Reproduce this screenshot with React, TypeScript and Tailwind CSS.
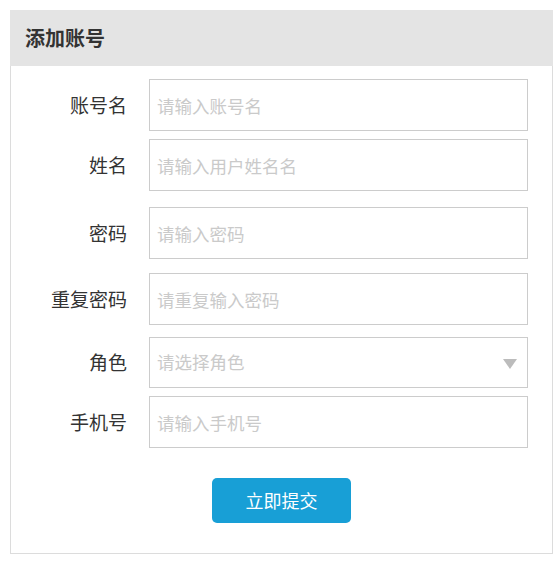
import { useState } from 'react';

const font = { fontFamily: '"Noto Sans CJK SC", "Noto Sans", sans-serif' };

type Field = {
  label: string;
  placeholder: string;
  gap: string;
  type?: string;
  select?: boolean;
};

const fields: Field[] = [
  { label: '账号名', placeholder: '请输入账号名', gap: 'mt-[13px]' },
  { label: '姓名', placeholder: '请输入用户姓名名', gap: 'mt-[8px]' },
  { label: '密码', placeholder: '请输入密码', gap: 'mt-[16px]', type: 'password' },
  { label: '重复密码', placeholder: '请重复输入密码', gap: 'mt-[14px]', type: 'password' },
  { label: '角色', placeholder: '请选择角色', gap: 'mt-[12px]', select: true },
  { label: '手机号', placeholder: '请输入手机号', gap: 'mt-[8px]' },
];

function FormRow({ field }: { field: Field }) {
  const [value, setValue] = useState('');

  return (
    <div className={`flex items-center ${field.gap}`}>
      <label className="w-[117px] pr-px text-right text-[19px] text-[#333]">{field.label}</label>
      {field.select ? (
        <div className="relative ml-[21px] flex h-[51px] w-[379px] items-center border border-[#ccc] px-[7px]">
          <span className="text-[17.5px] text-[#cacaca]">{field.placeholder}</span>
          {/* dropdown arrow */}
          <span className="absolute right-[10px] top-[21px] h-0 w-0 border-x-[7.5px] border-t-[10px] border-x-transparent border-t-[#bcbcbc]" />
        </div>
      ) : (
        <input
          type={field.type ?? 'text'}
          value={value}
          onChange={(e) => setValue(e.target.value)}
          placeholder={field.placeholder}
          className="ml-[21px] h-[52px] w-[379px] border border-[#ccc] px-[7px] text-[17.5px] text-[#333] outline-none placeholder:text-[#cacaca]"
          style={font}
        />
      )}
    </div>
  );
}

export default function App() {
  return (
    <div className="min-h-[562px] bg-white pl-[10px] pt-[10px]" style={font}>
      <div className="w-[543px]">
        {/* Panel header */}
        <div className="flex h-[56px] items-center bg-[#e4e4e4] px-[15px]">
          <h2 className="text-[20px] font-bold text-[#333]">添加账号</h2>
        </div>

        {/* Panel body */}
        <div className="flex flex-col border-x border-b border-[#dcdcdc] pb-[30px]">
          {fields.map((f) => (
            <FormRow key={f.label} field={f} />
          ))}
          <div className="mt-[30px] flex pl-[201px]">
            <button className="h-[45px] w-[139px] rounded-[5px] bg-[#189fd6] text-[18px] text-white">
              立即提交
            </button>
          </div>
        </div>
      </div>
    </div>
  );
}
